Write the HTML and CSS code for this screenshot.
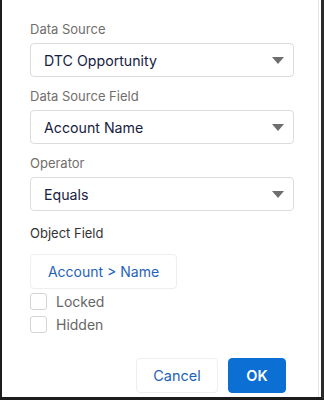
FILE: index.html
```html
<!DOCTYPE html>
<html>
<head>
<meta charset="utf-8">
<link rel="stylesheet" href="styles.css">
</head>
<body>
<div class="frame">
  <div class="panel">
    <div class="field first">
      <div class="label">Data Source</div>
      <div class="select"><span>DTC Opportunity</span><span class="arrow"></span></div>
    </div>
    <div class="field">
      <div class="label">Data Source Field</div>
      <div class="select"><span>Account Name</span><span class="arrow"></span></div>
    </div>
    <div class="field">
      <div class="label">Operator</div>
      <div class="select"><span>Equals</span><span class="arrow"></span></div>
    </div>
    <div class="section-label">Object Field</div>
    <div class="pill-btn">Account &gt; Name</div>
    <label class="check"><span class="box"></span><span>Locked</span></label>
    <label class="check"><span class="box"></span><span>Hidden</span></label>
    <div class="actions">
      <button class="btn cancel">Cancel</button>
      <button class="btn ok">OK</button>
    </div>
  </div>
</div>
</body>
</html>
```
FILE: styles.css
```css
html, body {
  margin: 0;
  padding: 0;
  background: #fff;
}
body {
  font-family: Inter, "Liberation Sans", sans-serif;
}
.frame {
  width: 324px;
  height: 400px;
  box-sizing: border-box;
  border-left: 2px solid #1c1c1c;
  border-right: 3px solid #2a2a2a;
  border-bottom: 3px solid #1c1c1c;
  padding-right: 2px;
}
.panel {
  height: 100%;
  box-sizing: border-box;
  border-right: 1px solid #e6e6e6;
  padding: 20px 0 0 28px;
}
.field {
  width: 264px;
  margin-bottom: 10px;
}
.label {
  font-size: 13px;
  line-height: 18px;
  color: #706e6b;
  margin-bottom: 5px;
}
.select {
  height: 34px;
  box-sizing: border-box;
  border: 1px solid #dcdcdc;
  border-radius: 4px;
  display: flex;
  align-items: center;
  justify-content: space-between;
  padding: 0 9px 0 13px;
  font-size: 14.2px;
  color: #18213f;
}
.arrow {
  width: 0;
  height: 0;
  border-left: 6px solid transparent;
  border-right: 6px solid transparent;
  border-top: 7px solid #6e6e6e;
  margin-top: 1px;
}
.section-label {
  font-size: 13px;
  line-height: 18px;
  color: #333;
  margin-top: 13px;
  margin-bottom: 12px;
}
.pill-btn {
  width: 147px;
  height: 35px;
  box-sizing: border-box;
  border: 1px solid #eeeeee;
  border-radius: 4px;
  display: flex;
  align-items: center;
  justify-content: center;
  font-size: 14px;
  color: #1f63b8;
  margin-bottom: 4px;
}
.check {
  display: flex;
  align-items: center;
  gap: 9px;
  height: 17px;
  margin-bottom: 6px;
  font-size: 14px;
  color: #666;
}
.box {
  width: 17px;
  height: 17px;
  box-sizing: border-box;
  border: 1px solid #d4d4d4;
  border-radius: 3px;
  background: #fff;
}
.actions {
  display: flex;
  gap: 10px;
  margin-top: 25px;
  padding-left: 106px;
}
.btn {
  height: 35px;
  box-sizing: border-box;
  border-radius: 4px;
  font-family: Inter, "Liberation Sans", sans-serif;
  font-size: 14.5px;
  padding: 0;
  cursor: pointer;
}
.cancel {
  width: 82px;
  background: #fff;
  border: 1px solid #eeeeee;
  color: #1f63b8;
}
.ok {
  width: 58px;
  background: #0b6fd3;
  border: 1px solid #0b6fd3;
  color: #fff;
  font-weight: 600;
}
```
